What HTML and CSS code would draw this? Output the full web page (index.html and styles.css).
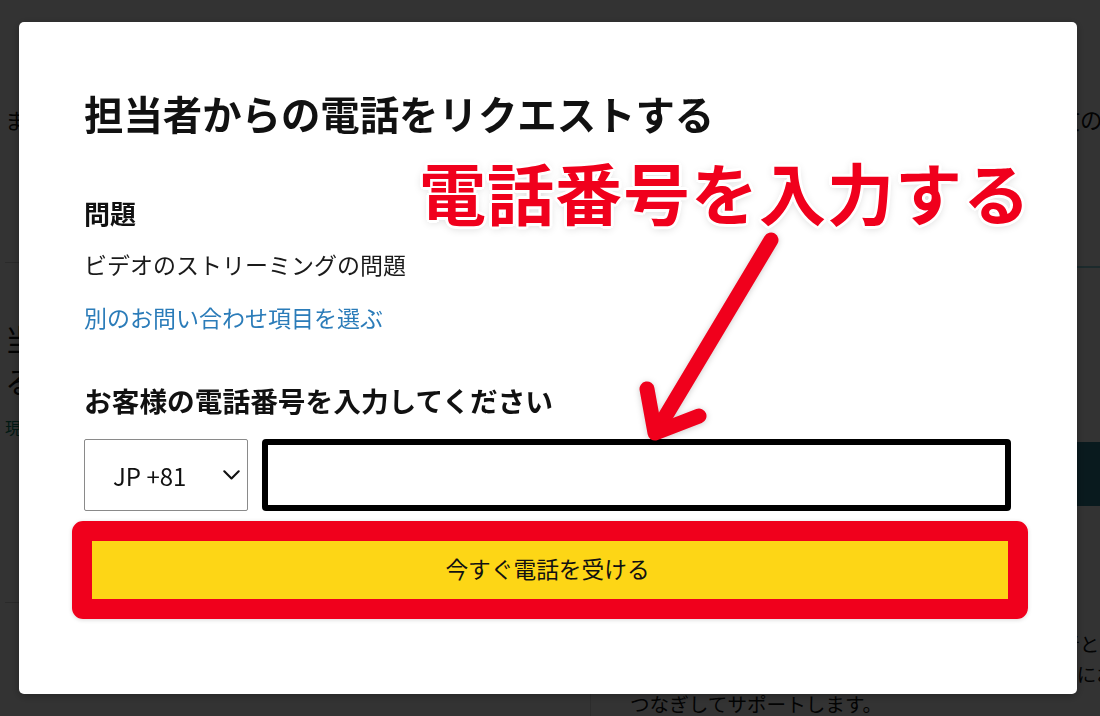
FILE: index.html
```html
<!DOCTYPE html>
<html lang="ja">
<head>
<meta charset="utf-8">
<title>担当者からの電話をリクエストする</title>
<link rel="stylesheet" href="styles.css">
</head>
<body>
<div class="page">
  <div class="lcol">
    <p class="lhead">まずはお問い合わせ内容をお選びください</p>
    <div class="lsec">
      <h3 class="lbig">当社からお客様にお電話でご連絡することもでき<br>るようになりました</h3>
      <p class="lwait">現在の待ち時間：1分未満</p>
    </div>
    <div class="lsec2"></div>
  </div>
  <div class="rcol">
    <p class="rhead">お客様のアカウントに関連する最近のご注文のステータス</p>
    <div class="rline"></div>
    <div class="rbtn"></div>
    <div class="rfoot">
      <p class="rtext">お電話をリクエストいただくと、数分以内に担当者とお話し<br>できます。内容によっては、担当者が専門スタッフにお<br>つなぎしてサポートします。</p>
    </div>
  </div>
</div>

<div class="overlay">
  <div class="modal" role="dialog">
    <h2 class="title">担当者からの電話をリクエストする</h2>
    <h3 class="label">問題</h3>
    <p class="issue">ビデオのストリーミングの問題</p>
    <a class="link" href="#">別のお問い合わせ項目を選ぶ</a>
    <h3 class="phone-label">お客様の電話番号を入力してください</h3>
    <div class="phone-row">
      <div class="select">
        <span>JP +81</span>
        <svg class="chev" width="17" height="10" viewBox="0 0 17 10"><path d="M1.3 1.3 L8.5 8.5 L15.7 1.3" fill="none" stroke="#111" stroke-width="2.1" stroke-linecap="round" stroke-linejoin="round"/></svg>
      </div>
      <div class="phone-input"></div>
    </div>
    <div class="cta-wrap">
      <button class="cta">今すぐ電話を受ける</button>
      <div class="cta-frame"></div>
    </div>

    <div class="note">電話番号を入力する</div>
    <svg class="arrow" width="1058" height="672" viewBox="0 0 1058 672">
      <g fill="none" stroke="#f0001c" stroke-width="15" stroke-linecap="round" stroke-linejoin="round">
        <path d="M752 218 L637 410"/>
        <path d="M628 367 L636 411 L680 394"/>
      </g>
    </svg>
  </div>
</div>
</body>
</html>
```
FILE: styles.css
```css
html, body {
  margin: 0;
  padding: 0;
}
body {
  width: 1100px;
  height: 716px;
  overflow: hidden;
  background: #ffffff;
  color: #0f1111;
  font-family: "Noto Sans CJK JP", "Noto Sans", sans-serif;
  position: relative;
}
p, h2, h3 { margin: 0; }

/* page behind the dialog */
.page {
  display: grid;
  grid-template-columns: 590px 510px;
  height: 716px;
}
.lcol {
  overflow: hidden;
  padding-left: 5px;
}
.lhead {
  margin-top: 103px;
  font-size: 22px;
  line-height: 32px;
  white-space: nowrap;
}
.lsec {
  margin-top: 127px;
  border-top: 1px solid #d0d0d0;
  padding-top: 54px;
}
.lbig {
  font-size: 30px;
  line-height: 42px;
  font-weight: 400;
  white-space: nowrap;
}
.lwait {
  margin-top: 14px;
  font-size: 16px;
  line-height: 24px;
  color: #067d62;
  white-space: nowrap;
}
.lsec2 {
  margin-top: 163px;
  border-top: 1px solid #d0d0d0;
}
.rcol {
  padding-left: 40px;
  overflow: hidden;
}
.rhead {
  margin-top: 103px;
  font-size: 22.5px;
  line-height: 32px;
  white-space: nowrap;
}
.rline {
  margin-top: 131px;
  height: 2px;
  background: #8ad0da;
}
.rbtn {
  margin-top: 174px;
  height: 64px;
  background: #2f8296;
}
.rfoot {
  margin-left: -40px;
  margin-top: 106px;
  padding: 17px 0 0 39px;
  border-left: 1px solid #dddddd;
  height: 200px;
}
.rtext {
  font-size: 19.6px;
  line-height: 30px;
  white-space: nowrap;
}

/* dim overlay + dialog */
.overlay {
  position: fixed;
  inset: 0;
  background: rgba(0, 0, 0, 0.8);
  padding: 22px 0 0 19px;
}
.modal {
  position: relative;
  box-sizing: border-box;
  width: 1058px;
  height: 672px;
  background: #ffffff;
  border-radius: 5px;
  box-shadow: 0 2px 10px rgba(0, 0, 0, 0.3);
  padding: 67px 66px 0 65px;
  display: flex;
  flex-direction: column;
  align-items: flex-start;
}
.title {
  font-size: 39.4px;
  line-height: 48px;
  font-weight: 700;
  color: #111111;
  white-space: nowrap;
}
.label {
  margin-top: 60px;
  font-size: 26px;
  line-height: 32px;
  font-weight: 700;
  color: #111111;
}
.issue {
  margin-top: 20px;
  font-size: 23px;
  line-height: 30px;
  color: #1a1a1a;
}
.link {
  margin-top: 23px;
  font-size: 23px;
  line-height: 30px;
  color: #2b7cb9;
  text-decoration: none;
}
.phone-label {
  margin-top: 51px;
  font-size: 27.7px;
  line-height: 34px;
  font-weight: 700;
  color: #111111;
}
.phone-row {
  margin-top: 22px;
  display: flex;
  gap: 14px;
  width: 927px;
  height: 72px;
}
.select {
  box-sizing: border-box;
  width: 164px;
  height: 72px;
  border: 1px solid #8a8a8a;
  border-radius: 2px;
  display: flex;
  align-items: center;
  justify-content: space-between;
  padding: 0 7px 0 28px;
  font-size: 24px;
  color: #111111;
}
.chev {
  display: block;
}
.phone-input {
  box-sizing: border-box;
  flex: 1;
  height: 72px;
  border: 6px solid #000000;
  border-radius: 4px;
}
.cta-wrap {
  position: relative;
  margin-top: 19px;
  width: 927px;
  height: 81px;
}
.cta {
  display: flex;
  align-items: center;
  justify-content: center;
  width: 100%;
  height: 100%;
  border: 0;
  border-radius: 8px;
  background: #fdd616;
  font-family: inherit;
  font-size: 22.7px;
  color: #111111;
  padding: 0 0 4px;
}
.cta-frame {
  position: absolute;
  left: -12px;
  right: -17px;
  top: -9px;
  bottom: -8px;
  border: 20px solid #f0001c;
  border-radius: 11px;
  box-shadow: 0 1px 4px rgba(0, 0, 0, 0.15);
}

/* red annotation */
.note {
  position: absolute;
  left: 400px;
  top: 124px;
  font-size: 67px;
  line-height: 90px;
  font-weight: 700;
  letter-spacing: 1px;
  color: #f0001c;
  white-space: nowrap;
  text-shadow:
    3px 0 0 #fff, -3px 0 0 #fff, 0 3px 0 #fff, 0 -3px 0 #fff,
    2px 2px 0 #fff, -2px -2px 0 #fff, 2px -2px 0 #fff, -2px 2px 0 #fff,
    0 2px 10px rgba(0, 0, 0, 0.2);
}
.arrow {
  position: absolute;
  left: 0;
  top: 0;
  pointer-events: none;
  filter: drop-shadow(0 1px 3px rgba(0, 0, 0, 0.2));
}
```
